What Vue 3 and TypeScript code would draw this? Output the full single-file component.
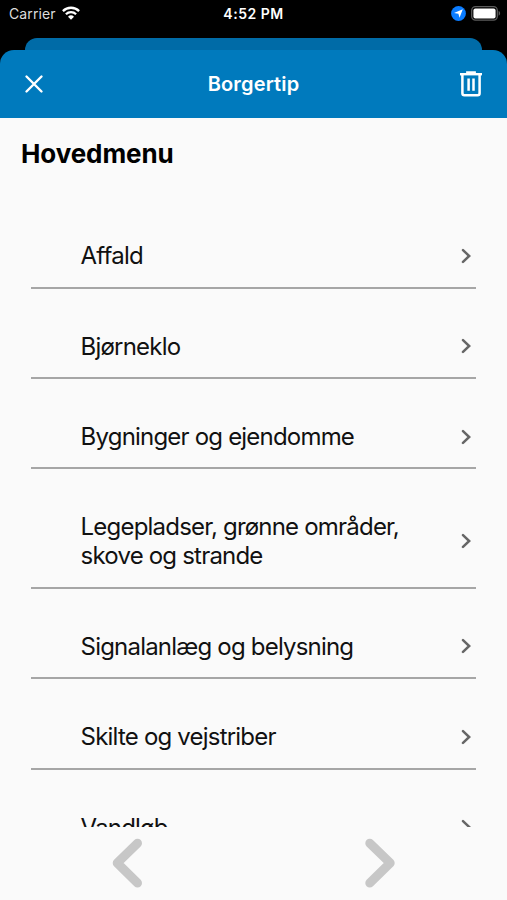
<script setup lang="ts">
interface Category {
  id: string
  lines: string[]
}

const categories: Category[] = [
  { id: 'affald', lines: ['Affald'] },
  { id: 'bjorneklo', lines: ['Bjørneklo'] },
  { id: 'bygninger', lines: ['Bygninger og ejendomme'] },
  { id: 'legepladser', lines: ['Legepladser, grønne områder,', 'skove og strande'] },
  { id: 'signal', lines: ['Signalanlæg og belysning'] },
  { id: 'skilte', lines: ['Skilte og vejstriber'] },
  { id: 'vandlob', lines: ['Vandløb'] },
]
</script>

<template>
  <div class="screen">
    <div class="status">
      <div class="status-left">
        <span class="carrier">Carrier</span>
        <svg class="wifi" width="18" height="14" viewBox="0 0 18 14" fill="none" stroke="#fff" stroke-width="2.3">
          <path d="M0.9 5.1a11.5 11.5 0 0 1 16.2 0" />
          <path d="M3.9 8.3a7.3 7.3 0 0 1 10.2 0" />
          <path d="M9 13.8 6 10.8a4.3 4.3 0 0 1 6 0z" fill="#fff" stroke="none" />
        </svg>
      </div>
      <span class="time">4:52 PM</span>
      <div class="status-right">
        <svg width="15" height="15" viewBox="0 0 15 15">
          <circle cx="7.5" cy="7.5" r="7.4" fill="#0a7cff" />
          <path d="M11.8 3.2 8.5 11.8 7.4 7.8 3 6.9z" fill="#fff" />
        </svg>
        <svg class="battery" width="30" height="15" viewBox="0 0 30 15">
          <rect x="0.7" y="0.7" width="25.6" height="13.4" rx="3.8" fill="none" stroke="#5c5c5c" stroke-width="1.3" />
          <rect x="2.4" y="2.6" width="22.2" height="9.8" rx="2" fill="#fff" />
          <path d="M27.6 5c2 .7 2 4 0 4.7z" fill="#5c5c5c" />
        </svg>
      </div>
    </div>

    <div class="back-card"></div>

    <header class="header">
      <svg class="close" width="20" height="20" viewBox="0 0 20 20" fill="none" stroke="#fff" stroke-width="2.4" stroke-linecap="round">
        <path d="M2.5 2.5l15 15M17.5 2.5l-15 15" />
      </svg>
      <h1 class="title">Borgertip</h1>
      <svg class="trash" width="24" height="26" viewBox="0 0 24 26" fill="none" stroke="#fff" stroke-width="2.5">
        <path d="M1 3.2h22" stroke-width="2.4" />
        <path d="M8 2.4V1.2h8v1.2" stroke-width="1.8" />
        <path d="M3.4 3v19.2q0 2 2 2h13.2q2 0 2-2V3" />
        <path d="M9.6 7.4v12.4M14.5 7.4v12.4" />
      </svg>
    </header>

    <main class="content">
      <h2 class="heading">Hovedmenu</h2>
      <ul class="list">
        <li v-for="item in categories" :key="item.id" class="row">
          <span class="label">
            <span v-for="line in item.lines" :key="line" class="line">{{ line }}</span>
          </span>
          <svg class="chevron" width="10" height="16" viewBox="0 0 10 16" fill="none" stroke="#666" stroke-width="2.5" stroke-linecap="round">
            <path d="M2 2.1 8.2 8 2 13.9" />
          </svg>
        </li>
      </ul>
    </main>

    <nav class="pager">
      <svg width="32" height="50" viewBox="0 0 32 50" fill="none" stroke="#c7c7c7" stroke-width="9" stroke-linecap="round" stroke-linejoin="round">
        <path d="M26.5 5.2 6.2 25l20.3 20" />
      </svg>
      <svg width="32" height="50" viewBox="0 0 32 50" fill="none" stroke="#c7c7c7" stroke-width="9" stroke-linecap="round" stroke-linejoin="round">
        <path d="M5.8 5.2l20.4 19.8L5.8 45" />
      </svg>
    </nav>
  </div>
</template>

<style>
body {
  margin: 0;
  background: #000;
}
</style>

<style scoped>
.screen {
  display: flex;
  flex-direction: column;
  width: 507px;
  height: 900px;
  overflow: hidden;
  background: #000;
  font-family: Inter, "Liberation Sans", sans-serif;
}

.status {
  box-sizing: border-box;
  display: grid;
  grid-template-columns: 1fr auto 1fr;
  align-items: center;
  height: 38px;
  padding: 0 6px 11px 6px;
  color: #fff;
  font-size: 14px;
  line-height: 18px;
}

.status-left,
.status-right {
  display: flex;
  align-items: center;
}

.status-left {
  gap: 6px;
  padding-left: 3px;
}

.status-right {
  justify-content: flex-end;
  gap: 5px;
}

.carrier {
  color: #ddd;
  letter-spacing: 0.1px;
}

.wifi {
  margin-top: -1px;
}

.time {
  font-weight: 600;
  font-size: 14px;
  letter-spacing: 0.5px;
}

.back-card {
  flex: none;
  height: 28px;
  margin: 0 25px -16px;
  border-radius: 12px 12px 0 0;
  background: #006ba7;
}

.header {
  flex: none;
  box-sizing: border-box;
  display: grid;
  grid-template-columns: 1fr auto 1fr;
  align-items: center;
  height: 68px;
  padding: 0 24px;
  border-radius: 14px 14px 0 0;
  background: #007abd;
}

.trash {
  justify-self: end;
}

.title {
  margin: 0;
  color: #fff;
  font-weight: 600;
  font-size: 20px;
  line-height: 26px;
  letter-spacing: 0.15px;
}

.content {
  flex: none;
  box-sizing: border-box;
  height: 709px;
  overflow: hidden;
  background: #fafafa;
}

.heading {
  margin: 0;
  padding: 20px 21px 0;
  color: #000;
  font-weight: 700;
  font-size: 26px;
  line-height: 32px;
  letter-spacing: -0.1px;
}

.list {
  margin: 0;
  padding: 28.3px 31px 0;
  list-style: none;
}

.row {
  display: flex;
  align-items: center;
  justify-content: space-between;
  box-sizing: border-box;
  padding: 43px 5px 16.4px 49.6px;
  border-bottom: 2px solid #a6a6a6;
}

.label {
  color: #111;
  font-size: 24px;
  line-height: 29px;
  letter-spacing: -0.8px;
}

.line {
  display: block;
  white-space: nowrap;
}

.pager {
  flex: 1;
  display: flex;
  justify-content: space-between;
  padding: 11px 111px 0;
  background: #fafafa;
}
</style>
